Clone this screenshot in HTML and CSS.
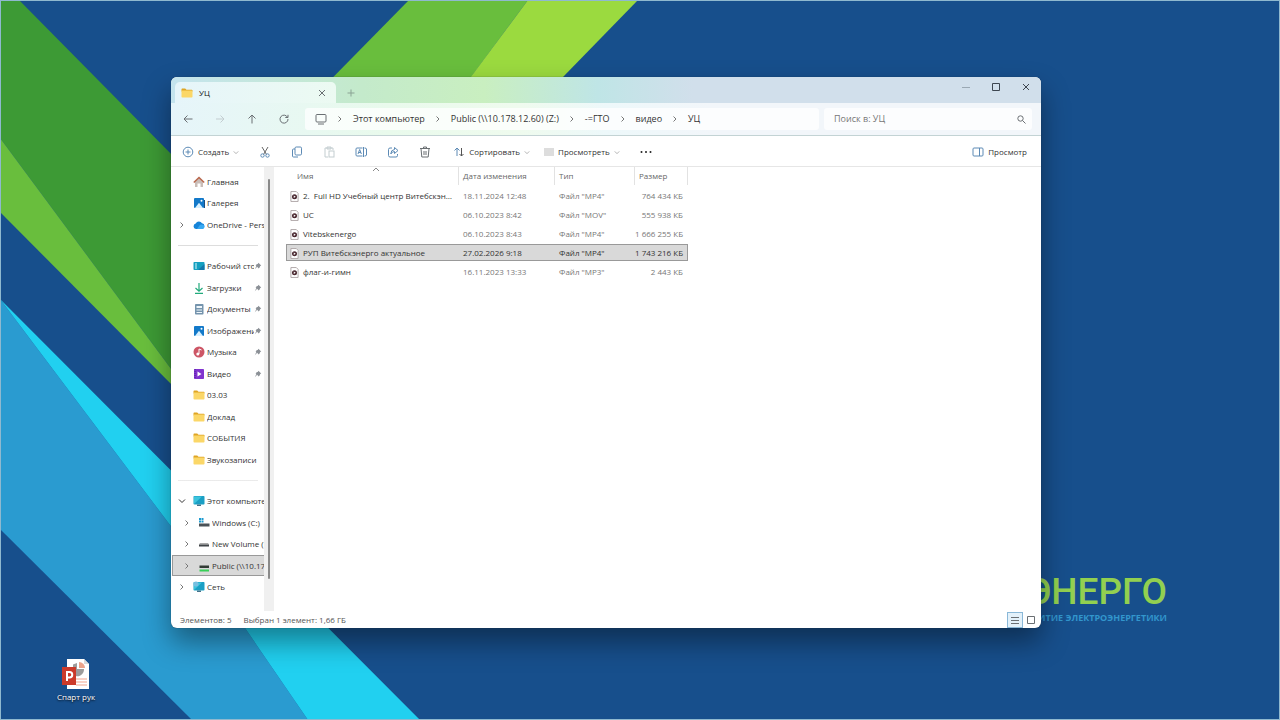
FILE: index.html
```html
<!DOCTYPE html>
<html lang="ru">
<head>
  <meta charset="UTF-8">
  <meta name="viewport" content="width=device-width, initial-scale=1.0">
  <title>УЦ</title>
  <link rel="stylesheet" href="styles.css">
</head>
<body>

  <!-- Shared icons -->
  <svg class="sprite" aria-hidden="true">
    <symbol id="folder" viewBox="0 0 12 10">
      <path d="M.5 1.2Q.5.5 1.2.5h3l1.3 1.2h5.3q.7 0 .7.7v1H.5z" fill="#dfa524"/>
      <rect x=".5" y="2.6" width="11" height="7" rx=".8" fill="#fbd768"/>
    </symbol>
    <symbol id="file" viewBox="0 0 10 12">
      <path d="M1 .5h6l2 2v9H1z" fill="#fff" stroke="#a9a0a2"/>
      <circle cx="5" cy="6.2" r="2.8" fill="#4a2830"/>
      <path d="M4.2 4.8v2.8l2.2-1.4z" fill="#fff"/>
    </symbol>
    <symbol id="pin" viewBox="0 0 10 10">
      <path d="M5.5 1 9 4.5 7.8 5 7 7 5.8 8 4 6 1 9l2-4-1-1 1-1 2-.7z" fill="#8b9096"/>
    </symbol>
    <symbol id="right" viewBox="0 0 6 8"><path d="m1.500 1.500 2.500 2.500-2.500 2.500" fill="none" stroke="#777"/></symbol>
    <symbol id="down" viewBox="0 0 8 6"><path d="m1 1.5 3 3 3-3" fill="none" stroke="currentColor"/></symbol>
    <symbol id="picture" viewBox="0 0 12 12">
      <rect x="1" y="1" width="10" height="10" rx="1" fill="#1379c9"/>
      <path d="m2 11 4-5.200L10 11z" fill="#d9f1ff"/><circle cx="8.500" cy="3.700" r="1" fill="#fff"/>
    </symbol>
    <symbol id="monitor" viewBox="0 0 12 12">
      <rect x=".5" y="1" width="11" height="8.500" rx=".8" fill="#1b9fc4"/>
      <path d="M1 9V1.500h8z" fill="#3cc4dd"/><path d="M4 9.500h4v1.500H4z" fill="#43728a"/>
    </symbol>
  </svg>

  <!-- Wallpaper -->
  <svg class="wallpaper" viewBox="0 0 1280 720" preserveAspectRatio="none" aria-hidden="true">
    <rect width="1280" height="720" fill="#174f8c"/>
    <path d="M0 0h19l161 163v218L0 138z" fill="#3d9a35"/>
    <path d="M0 138 180 381v12L0 212z" fill="#69be3d"/>
    <path d="M409 0h119l-57 77-30 40H294z" fill="#69be3d"/>
    <path d="M528 0h110l-75 77-40 40h-82z" fill="#9bda3f"/>
    <path d="M0 299 170 525l75 103 63 92H192L0 529z" fill="#2a9bd0"/>
    <path d="M0 299 420 720H308l-63-92-75-103z" fill="#21d0f0"/>
    <rect x=".5" y=".5" width="1279" height="719" fill="none" stroke="#8fb9cf"/>
  </svg>

  <div class="brand">
    <div class="brand-name">ЭНЕРГО</div>
    <div class="brand-line">РАЗВИТИЕ ЭЛЕКТРОЭНЕРГЕТИКИ</div>
  </div>

  <a href="#" class="shortcut">
    <svg width="28" height="30" viewBox="0 0 28 30">
      <path d="M5 0h17l5 5v25H5z" fill="#fff"/><path d="M22 0v5h5z" fill="#d9d9d9"/>
      <path d="M15 4v6h7a7 7 0 0 1-11 6V5.500z" fill="#9c9c9c"/><path d="M17 3a6 6 0 0 1 6 6h-6z" fill="#eba38b"/>
      <path d="M14 20h11M14 23h11M14 26h11" stroke="#f0a58f"/>
      <rect y="8" width="14" height="18" fill="#cb3a2a"/>
      <path d="M5 22v-9h2.500a2.500 2.500 0 0 1 0 5.500H5" fill="none" stroke="#fff" stroke-width="2"/>
    </svg>
    <span>Спарт рук</span>
  </a>

  <!-- Explorer window -->
  <main class="window">
    <header class="titlebar">
      <div class="tab">
        <svg width="12" height="10"><use href="#folder"/></svg>
        <span class="tab-name">УЦ</span>
        <button class="icon-btn tab-close" aria-label="Закрыть вкладку"><svg width="8" height="8" viewBox="0 0 8 8"><path d="m1 1 6 6M7 1 1 7"/></svg></button>
      </div>
      <button class="icon-btn tab-add" aria-label="Новая вкладка"><svg width="8" height="8" viewBox="0 0 8 8"><path d="M4 .5v7M.5 4h7"/></svg></button>
      <div class="controls">
        <button class="icon-btn dim" aria-label="Свернуть"><svg width="8" height="8" viewBox="0 0 8 8"><path d="M0 4.500h8"/></svg></button>
        <button class="icon-btn" aria-label="Развернуть"><svg width="8" height="8" viewBox="0 0 8 8"><path d="M.5.5h7v7h-7z"/></svg></button>
        <button class="icon-btn" aria-label="Закрыть"><svg width="8" height="8" viewBox="0 0 8 8"><path d="m1 1 6 6M7 1 1 7"/></svg></button>
      </div>
    </header>

    <div class="navbar">
      <button class="icon-btn" aria-label="Назад"><svg width="10" height="10" viewBox="0 0 10 10"><path d="M9.500 5H1M4.500 1.500 1 5l3.500 3.500"/></svg></button>
      <button class="icon-btn faint" aria-label="Вперёд"><svg width="10" height="10" viewBox="0 0 10 10"><path d="M1 5h8M5.500 1.500 9 5 5.500 8.500"/></svg></button>
      <button class="icon-btn" aria-label="Вверх"><svg width="10" height="10" viewBox="0 0 10 10"><path d="M5 9.500V1M1.500 4.500 5 1l3.500 3.500"/></svg></button>
      <button class="icon-btn" aria-label="Обновить"><svg width="10" height="10" viewBox="0 0 10 10"><path d="M8.500 3.200A4 4 0 1 0 9 5M9 .8v2.700H6.300"/></svg></button>
      <nav class="path">
        <svg class="line" width="12" height="12" viewBox="0 0 12 12"><rect x="1" y="1.500" width="10" height="7.500" rx="1"/><path d="M3 11h6"/></svg>
        <svg width="6" height="8"><use href="#right"/></svg>
        <a href="#">Этот компьютер</a>
        <svg width="6" height="8"><use href="#right"/></svg>
        <a href="#">Public (\\10.178.12.60) (Z:)</a>
        <svg width="6" height="8"><use href="#right"/></svg>
        <a href="#">-=ГТО</a>
        <svg width="6" height="8"><use href="#right"/></svg>
        <a href="#">видео</a>
        <svg width="6" height="8"><use href="#right"/></svg>
        <a href="#">УЦ</a>
      </nav>
      <label class="search">
        <input type="text" placeholder="Поиск в: УЦ" aria-label="Поиск">
        <svg class="line" width="9" height="9" viewBox="0 0 9 9"><circle cx="3.500" cy="3.500" r="2.700"/><path d="m5.500 5.500 3 3"/></svg>
      </label>
    </div>

    <div class="toolbar">
      <button class="tool create">
        <svg class="blue" width="12" height="12" viewBox="0 0 12 12"><circle cx="6" cy="6" r="4.800"/><path d="M6 3.500v5M3.500 6h5"/></svg>
        Создать
        <svg class="arrow" width="6" height="5"><use href="#down"/></svg>
      </button>
      <div class="tool-group">
        <button class="icon-btn" aria-label="Вырезать"><svg class="blue" width="12" height="12" viewBox="0 0 12 12"><path d="m3 1 4.500 7.500M9 1 4.500 8.500" stroke="#666"/><circle cx="3.500" cy="9.500" r="1.700"/><circle cx="8.500" cy="9.500" r="1.700"/></svg></button>
        <button class="icon-btn" aria-label="Копировать"><svg class="blue" width="12" height="12" viewBox="0 0 12 12"><rect x="4" y="1" width="6.500" height="8" rx="1.200"/><path d="M4 3H2.500Q1.500 3 1.500 4v6q0 1 1 1H7"/></svg></button>
        <button class="icon-btn faint" aria-label="Вставить"><svg width="12" height="12" viewBox="0 0 12 12"><path d="M5 11H2V2h8v2M4 1h4v2H4z"/><rect x="6" y="5" width="5" height="6"/></svg></button>
        <button class="icon-btn" aria-label="Переименовать"><svg class="blue" width="12" height="12" viewBox="0 0 12 12"><path d="M7.500 2H2Q1 2 1 3v6q0 1 1 1h5.500M9.500 2q2 0 2 1v6q0 1-2 1M8.500 1v10M3 8l1.700-4.500L6.400 8M3.500 6.500h2.400"/></svg></button>
        <button class="icon-btn" aria-label="Поделиться"><svg class="blue" width="12" height="12" viewBox="0 0 12 12"><path d="M5 2H3Q1.500 2 1.500 3.500v6Q1.500 11 3 11h6q1.500 0 1.500-1.500V8"/><path d="M7.500 1.500 11 4.500l-3.500 3v-2Q5 5.500 3.800 8 3.800 3.800 7.500 3.500z"/></svg></button>
        <button class="icon-btn" aria-label="Удалить"><svg width="12" height="12" viewBox="0 0 12 12"><path d="M1 2.500h10M4.500 2.500V1h3v1.500M2 2.500l.8 8.500h6.400l.8-8.500M5 5v4M7 5v4"/></svg></button>
      </div>
      <button class="tool">
        <svg class="blue" width="12" height="12" viewBox="0 0 12 12"><path d="M4 10V2M1.500 4.500 4 2l2.500 2.500"/><path d="M8.500 2v8M6.500 8l2 2 2-2" stroke="#555"/></svg>
        Сортировать
        <svg class="arrow" width="6" height="5"><use href="#down"/></svg>
      </button>
      <button class="tool">
        <svg width="10" height="8" viewBox="0 0 10 8"><rect width="10" height="8" fill="#ddd" stroke="none"/></svg>
        Просмотреть
        <svg class="arrow" width="6" height="5"><use href="#down"/></svg>
      </button>
      <button class="icon-btn more" aria-label="Подробнее"><svg class="dots" width="12" height="4" viewBox="0 0 12 4"><circle cx="1.500" cy="2" r="1"/><circle cx="6" cy="2" r="1"/><circle cx="10.500" cy="2" r="1"/></svg></button>
      <button class="tool preview">
        <svg class="blue" width="12" height="10" viewBox="0 0 12 10"><rect x="1" y="1" width="10" height="8" rx="1"/><path d="M7.500 1v8"/></svg>
        Просмотр
      </button>
    </div>

    <div class="content">
      <aside class="sidebar">
        <nav class="tree">
          <a href="#"><i></i><svg width="12" height="12" viewBox="0 0 12 12"><path d="M2 5.500 6 2l4 3.500V11H7.500V7.500h-3V11H2z" fill="#c9bdb8"/><path d="M.8 6.500 6 1.500l5.200 5" fill="none" stroke="#b8674c" stroke-width="1.500"/></svg><span>Главная</span></a>
          <a href="#"><i></i><svg width="12" height="12"><use href="#picture"/><path d="M11.500 3v8" stroke="#1b4e80"/></svg><span>Галерея</span></a>
          <a href="#"><i><svg width="6" height="8"><use href="#right"/></svg></i><svg width="12" height="12" viewBox="0 0 12 12"><path d="M3 10a2.800 2.800 0 0 1-.3-5.500A3.600 3.600 0 0 1 9 4.300 2.900 2.900 0 0 1 9.200 10z" fill="#1684d8"/><path d="M4 10 7 5.800q4-1 4.500 2 0 2-2 2.200z" fill="#37a9f3"/></svg><span>OneDrive - Personal</span></a>
          <hr>
          <a href="#"><i></i><svg width="12" height="12" viewBox="0 0 12 12"><rect x=".5" y="2" width="11" height="8" rx=".8" fill="#15a0c0"/><path d="M2 4h2M2 6h2M2 8h2" stroke="#d9f6fa"/><path d="M5 10h6.500V4z" fill="#1478aa"/></svg><span>Рабочий стол</span><svg class="pin" width="8" height="8"><use href="#pin"/></svg></a>
          <a href="#"><i></i><svg width="12" height="12" viewBox="0 0 12 12"><path d="M6 1v8M2.500 6 6 9.300 9.500 6M2 11.300h8" fill="none" stroke="#22aa7c" stroke-width="1.200"/></svg><span>Загрузки</span><svg class="pin" width="8" height="8"><use href="#pin"/></svg></a>
          <a href="#"><i></i><svg width="12" height="12" viewBox="0 0 12 12"><rect x="2" y="1" width="8.500" height="10.500" rx=".8" fill="#7594ad"/><path d="M3.500 3h5.500v2H3.500zM3.500 6.500h5.500v1H3.500zM3.500 9h5.500v1H3.500z" fill="#eef5fa"/></svg><span>Документы</span><svg class="pin" width="8" height="8"><use href="#pin"/></svg></a>
          <a href="#"><i></i><svg width="12" height="12"><use href="#picture"/></svg><span>Изображения</span><svg class="pin" width="8" height="8"><use href="#pin"/></svg></a>
          <a href="#"><i></i><svg width="12" height="12" viewBox="0 0 12 12"><circle cx="6" cy="6" r="5.500" fill="#cd5666"/><path d="M6 8V3l2.500 1" fill="none" stroke="#fff"/><circle cx="4.800" cy="8" r="1.500" fill="#fff"/></svg><span>Музыка</span><svg class="pin" width="8" height="8"><use href="#pin"/></svg></a>
          <a href="#"><i></i><svg width="12" height="12" viewBox="0 0 12 12"><rect x="1" y="1" width="10" height="10" rx=".8" fill="#8134cf"/><path d="M2 1v10" stroke="#4e1d9c" stroke-dasharray="1"/><path d="M4.500 3.500v5l4-2.500z" fill="#fff"/></svg><span>Видео</span><svg class="pin" width="8" height="8"><use href="#pin"/></svg></a>
          <a href="#"><i></i><svg width="12" height="10"><use href="#folder"/></svg><span>03.03</span></a>
          <a href="#"><i></i><svg width="12" height="10"><use href="#folder"/></svg><span>Доклад</span></a>
          <a href="#"><i></i><svg width="12" height="10"><use href="#folder"/></svg><span>СОБЫТИЯ</span></a>
          <a href="#"><i></i><svg width="12" height="10"><use href="#folder"/></svg><span>Звукозаписи</span></a>
          <hr class="light">
          <a href="#"><i><svg width="8" height="6"><use href="#down"/></svg></i><svg width="12" height="12"><use href="#monitor"/></svg><span>Этот компьютер</span></a>
          <a href="#" class="child"><i><svg width="6" height="8"><use href="#right"/></svg></i><svg width="12" height="12" viewBox="0 0 12 12"><path d="M1 1h2v2H1zM3.500 1h2v2h-2zM1 3.500h2v2H1zM3.500 3.500h2v2h-2z" fill="#1d9bd0"/><path d="M1 6.500h10.500v3H1z" fill="#4b5257"/></svg><span>Windows (C:)</span></a>
          <a href="#" class="child"><i><svg width="6" height="8"><use href="#right"/></svg></i><svg width="12" height="12" viewBox="0 0 12 12"><path d="M2 5h8l1 1.500H1z" fill="#aaa"/><path d="M1 6.500h10v2H1z" fill="#404548"/></svg><span>New Volume (D:)</span></a>
          <a href="#" class="child selected"><i><svg width="6" height="8"><use href="#right"/></svg></i><svg width="12" height="12" viewBox="0 0 12 12"><path d="M1.500 5.500h9.500v2.500H1.500z" fill="#333c36"/><path d="M1.500 9.500H11v2H1.500z" fill="#38cf58"/></svg><span>Public (\\10.178.12.60)</span></a>
          <a href="#"><i><svg width="6" height="8"><use href="#right"/></svg></i><svg width="12" height="12"><use href="#monitor"/><circle cx="3" cy="3" r="2.500" fill="#78bfe0"/></svg><span>Сеть</span></a>
        </nav>
        <div class="scrollbar"><div class="thumb"></div></div>
      </aside>

      <section class="files">
        <table>
          <colgroup><col class="col-name"><col class="col-date"><col class="col-type"><col class="col-size"></colgroup>
          <thead>
            <tr><th class="sorted">Имя<svg class="sort" width="8" height="5" viewBox="0 0 8 5"><path d="m1 4 3-3 3 3" fill="none" stroke="#888"/></svg></th><th>Дата изменения</th><th>Тип</th><th>Размер</th></tr>
          </thead>
          <tbody>
            <tr><td class="name"><svg width="9" height="11"><use href="#file"/></svg>2.&nbsp; Full HD Учебный центр Витебскэнерго</td><td>18.11.2024 12:48</td><td>Файл "MP4"</td><td class="size">764 434 КБ</td></tr>
            <tr><td class="name"><svg width="9" height="11"><use href="#file"/></svg>UC</td><td>06.10.2023 8:42</td><td>Файл "MOV"</td><td class="size">555 938 КБ</td></tr>
            <tr><td class="name"><svg width="9" height="11"><use href="#file"/></svg>Vitebskenergo</td><td>06.10.2023 8:43</td><td>Файл "MP4"</td><td class="size">1 666 255 КБ</td></tr>
            <tr class="selected"><td class="name"><svg width="9" height="11"><use href="#file"/></svg>РУП Витебскэнерго актуальное</td><td>27.02.2026 9:18</td><td>Файл "MP4"</td><td class="size">1 743 216 КБ</td></tr>
            <tr><td class="name"><svg width="9" height="11"><use href="#file"/></svg>флаг-и-гимн</td><td>16.11.2023 13:33</td><td>Файл "MP3"</td><td class="size">2 443 КБ</td></tr>
          </tbody>
        </table>
      </section>
    </div>

    <footer class="status">
      <span>Элементов: 5</span>
      <span>Выбран 1 элемент: 1,66 ГБ</span>
      <div class="views">
        <button class="icon-btn active" aria-label="Таблица"><svg width="10" height="10" viewBox="0 0 10 10"><path d="M1 2.500h8M1 5.500h8M1 8.500h8"/></svg></button>
        <button class="icon-btn" aria-label="Крупные значки"><svg width="10" height="10" viewBox="0 0 10 10"><path d="M1.500 1.500h7v7h-7z"/></svg></button>
      </div>
    </footer>
  </main>

</body>
</html>
```
FILE: styles.css
```css
* {
  box-sizing: border-box;
}

body {
  margin: 0;
  height: 100vh;
  overflow: hidden;
  position: relative;
  background: #174f8c;
  font-family: "Open Sans", "Noto Sans", sans-serif;
  font-size: 8px;
  line-height: 12px;
  color: #333;
}

a {
  color: inherit;
  text-decoration: none;
}

button {
  border: none;
  padding: 0;
  background: none;
  font: inherit;
  color: inherit;
}

svg {
  display: block;
  flex: none;
}

.sprite {
  position: absolute;
  width: 0;
  height: 0;
}

.wallpaper {
  position: absolute;
  width: 100%;
  height: 100%;
}

/* desktop */
.brand {
  position: absolute;
  right: 113px;
  bottom: 96px;
  text-align: right;
  white-space: nowrap;
}

.brand-name {
  font-family: Roboto, sans-serif;
  font-size: 37px;
  font-weight: 500;
  line-height: 40px;
  color: #92d050;
}

.brand-line {
  font-weight: bold;
  color: #3296cc;
  font-size: 9px;
}

.shortcut {
  position: absolute;
  left: 46px;
  bottom: 17px;
  width: 60px;
  display: flex;
  flex-direction: column;
  align-items: center;
  gap: 2px;
  color: #fff;
  text-shadow: 0 1px 2px #000;
}

/* window */
.window {
  position: absolute;
  top: 77px;
  right: 239px;
  bottom: 92px;
  left: 171px;
  display: flex;
  flex-direction: column;
  background: #fff;
  border-radius: 6px;
  overflow: hidden;
  box-shadow: 0 0 1px #234, 0 14px 28px rgba(0, 0, 0, 0.4);
}

.icon-btn {
  width: 32px;
  height: 24px;
  display: flex;
  align-items: center;
  justify-content: center;
}

.icon-btn svg,
.tool svg,
.line {
  fill: none;
  stroke: #6a6f73;
}

.icon-btn .blue,
.tool .blue {
  stroke: #5c8ab5;
}

.icon-btn .dots {
  fill: #222;
  stroke: none;
}

.faint svg {
  stroke: #c3cdd0;
}

.dim svg {
  stroke: #9aa8b3;
}

.titlebar {
  height: 26px;
  display: flex;
  align-items: flex-end;
  padding-left: 4px;
  background: linear-gradient(to right, #c5e4ee, #c4eacb 22%, #c9efc0 36%, #bfe5e6 49%, #d1dfeb 60%);
}

.tab {
  width: 161px;
  height: 21px;
  display: flex;
  align-items: center;
  gap: 6px;
  padding-left: 6px;
  border-radius: 5px 5px 0 0;
  background: linear-gradient(to right, #e6f5fa, #ecfaf2);
}

.tab-name {
  flex: 1;
  color: #111;
}

.tab-close {
  width: 28px;
  height: 20px;
}

.tab-add {
  width: 30px;
  height: 20px;
}

.tab-add svg {
  stroke: #8aa394;
}

.controls {
  display: flex;
  align-self: flex-start;
  margin-left: auto;
}

.controls .icon-btn {
  width: 30px;
  height: 20px;
}

.controls svg {
  stroke: #3d4650;
}

.controls .dim svg {
  stroke: #9aa8b3;
}

.navbar {
  height: 33px;
  display: flex;
  align-items: center;
  padding: 0 9px 0 1px;
  border-bottom: 1px solid #c3d3d4;
  background: linear-gradient(to right, #e6f5fa, #e9faec 25%, #effbee 40%, #edf8fa 50%, #f2f6fa 62%);
}

.path,
.search {
  height: 22px;
  display: flex;
  align-items: center;
  border-radius: 3px;
  background: rgba(255, 255, 255, 0.75);
  font-size: 9px;
}

.path {
  flex: 1;
  gap: 10px;
  margin: 0 5px;
  padding-left: 10px;
  white-space: nowrap;
}

.search {
  width: 208px;
  padding: 0 6px 0 10px;
}

.search input {
  flex: 1;
  min-width: 0;
  border: none;
  outline: none;
  padding: 0;
  background: none;
  font: inherit;
}

.search input::placeholder {
  color: #777;
}

.toolbar {
  height: 31px;
  display: flex;
  align-items: center;
  padding: 2px 14px 0 11px;
  border-bottom: 1px solid #e6e6e6;
}

.tool {
  height: 24px;
  display: flex;
  align-items: center;
  gap: 4px;
  padding-right: 14px;
}

.tool .arrow {
  color: #999;
  stroke: none;
}

.create {
  padding-right: 10px;
}

.tool-group {
  display: flex;
  margin-right: 12px;
}

.more {
  width: 24px;
}

.preview {
  margin-left: auto;
  padding-right: 0;
}

.content {
  flex: 1;
  display: flex;
  min-height: 0;
}

/* navigation tree */
.sidebar {
  width: 103px;
  display: flex;
}

.tree {
  flex: 1;
  min-width: 0;
  display: flex;
  flex-direction: column;
  padding: 4px 0 13px 1px;
}

.tree a {
  flex: 1;
  display: flex;
  align-items: center;
  border: 1px solid transparent;
  border-right: none;
  min-height: 0;
}

.tree i {
  width: 18px;
  margin-right: 2px;
  flex: none;
  display: flex;
  justify-content: center;
}

.tree .child {
  padding-left: 5px;
}

.tree span {
  flex: 1;
  min-width: 0;
  margin-left: 2px;
  overflow: hidden;
  white-space: nowrap;
}

.tree .pin {
  margin-right: 2px;
}

.tree hr {
  flex: 1;
  width: 80px;
  margin: 0 0 0 6px;
  border: none;
  background: linear-gradient(#ddd, #ddd) center / 100% 1px no-repeat;
}

.tree .light {
  opacity: 0.6;
}

.tree .selected {
  background: #d9d9d9;
  border-color: #999;
}

.scrollbar {
  width: 10px;
  padding: 12px 4px 32px;
  background: #f0f0f0;
}

.thumb {
  width: 2px;
  height: 100%;
  border-radius: 1px;
  background: #8a8a8a;
}

/* file list */
.files {
  flex: 1;
  padding-left: 12px;
}

table {
  width: 402px;
  table-layout: fixed;
  border-spacing: 0 2px;
  margin-top: -2px;
}

.col-name {
  width: 173px;
}

.col-date {
  width: 96px;
}

.col-type {
  width: 80px;
}

th {
  height: 18px;
  padding: 0 4px;
  border-right: 1px solid #e2e2e2;
  text-align: left;
  font-weight: normal;
  color: #666;
}

.sorted {
  position: relative;
  padding-left: 11px;
}

.sort {
  position: absolute;
  top: 0;
  left: 86px;
}

td {
  height: 17px;
  padding: 0 4px;
  color: #777;
  white-space: nowrap;
}

.name {
  overflow: hidden;
  text-overflow: ellipsis;
  color: #333;
}

.name svg {
  display: inline-block;
  vertical-align: -3px;
  margin-right: 4px;
}

.size {
  padding: 0 5px 0 0;
  text-align: right;
}

tbody .selected {
  background: #d9d9d9;
  outline: 1px solid #999;
  outline-offset: -1px;
}

tbody .selected td {
  color: #333;
}

.status {
  height: 17px;
  display: flex;
  align-items: center;
  gap: 12px;
  padding: 0 2px 0 9px;
  color: #555;
}

.views {
  display: flex;
  margin-left: auto;
}

.views .icon-btn {
  width: 16px;
  height: 16px;
}

.views .active {
  background: #e3f1fa;
  border: 1px solid #8ab8d8;
}
```
